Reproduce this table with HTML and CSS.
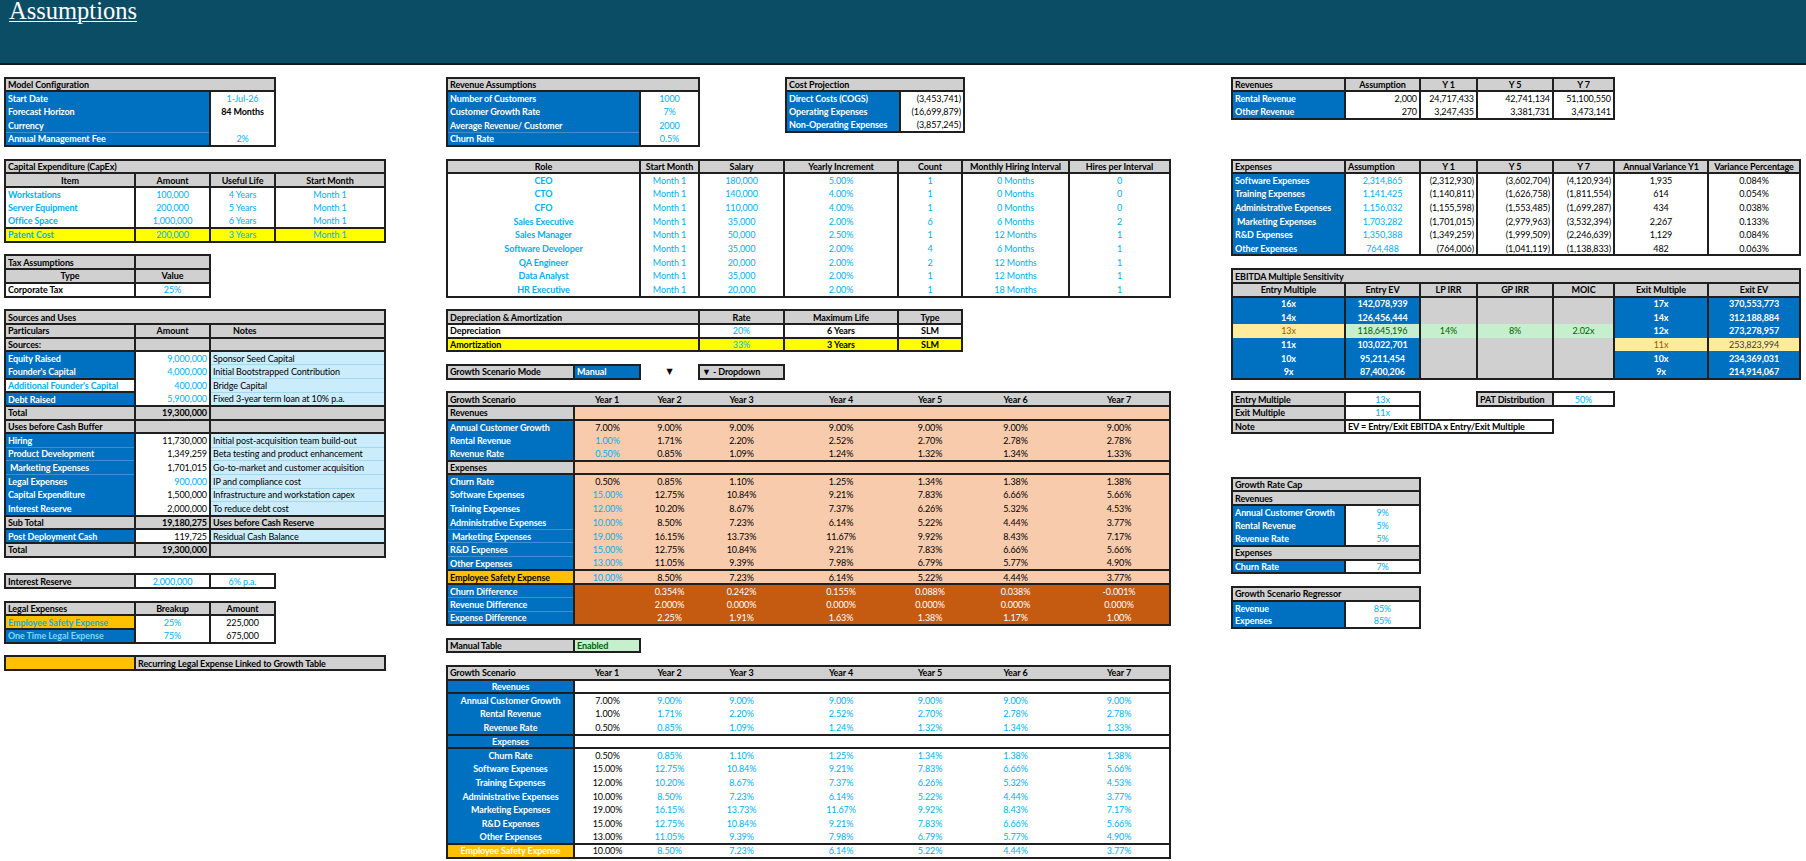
FILE: index.html
```html
<!DOCTYPE html>
<html lang="en">
<head>
<meta charset="utf-8">
<title>Assumptions</title>
<link rel="stylesheet" href="styles.css">
</head>
<body>
<header class="hdr"><h1 class="ttl">Assumptions</h1></header>
<main class="sheet">

<!-- LEFT COLUMN -->
<section class="col colL">
  <table class="w270">
    <colgroup><col class="L1"><col class="L2"><col class="L3"></colgroup>
    <tr><td class="g" colspan="3">Model Configuration</td></tr>
    <tr><td class="b" colspan="2">Start Date</td><td class="w c lb">1-Jul-26</td></tr>
    <tr><td class="b" colspan="2">Forecast Horizon</td><td class="w c bd">84 Months</td></tr>
    <tr><td class="b" colspan="2">Currency</td><td class="w c"></td></tr>
    <tr class="fl"><td class="b" colspan="2">Annual Management Fee</td><td class="w c lb">2%</td></tr>
  </table>

  <table class="w380 gap1">
    <colgroup><col class="L1"><col class="L2"><col class="L3"><col class="L4"></colgroup>
    <tr><td class="g" colspan="4">Capital Expenditure (CapEx)</td></tr>
    <tr><td class="g c">Item</td><td class="g c">Amount</td><td class="g c">Useful Life</td><td class="g c">Start Month</td></tr>
    <tr><td class="w lb bd">Workstations</td><td class="w c lb">100,000</td><td class="w c lb">4 Years</td><td class="w c lb">Month 1</td></tr>
    <tr><td class="w lb bd">Server Equipment</td><td class="w c lb">200,000</td><td class="w c lb">5 Years</td><td class="w c lb">Month 1</td></tr>
    <tr><td class="w lb bd">Office Space</td><td class="w c lb">1,000,000</td><td class="w c lb">6 Years</td><td class="w c lb">Month 1</td></tr>
    <tr><td class="y lb bd">Patent Cost</td><td class="y c lb">200,000</td><td class="y c lb">3 Years</td><td class="y c lb">Month 1</td></tr>
  </table>

  <table class="w205 gap1">
    <colgroup><col class="L1"><col class="L2"></colgroup>
    <tr><td class="g">Tax Assumptions</td><td class="g"></td></tr>
    <tr><td class="g c">Type</td><td class="g c">Value</td></tr>
    <tr><td class="w bd">Corporate Tax</td><td class="w c lb">25%</td></tr>
  </table>

  <table class="w380 gap1">
    <colgroup><col class="L1"><col class="L2"><col class="L3"><col class="L4"></colgroup>
    <tr><td class="g" colspan="4">Sources and Uses</td></tr>
    <tr><td class="g">Particulars</td><td class="g c">Amount</td><td class="g nt" colspan="2">Notes</td></tr>
    <tr><td class="g">Sources:</td><td class="g"></td><td class="g" colspan="2"></td></tr>
    <tr><td class="b">Equity Raised</td><td class="w r lb">9,000,000</td><td class="lc" colspan="2">Sponsor Seed Capital</td></tr>
    <tr class="fln"><td class="b">Founder's Capital</td><td class="w r lb">4,000,000</td><td class="lc" colspan="2">Initial Bootstrapped Contribution</td></tr>
    <tr class="fln"><td class="wb lb bd">Additional Founder's Capital</td><td class="w r lb">400,000</td><td class="lc" colspan="2">Bridge Capital</td></tr>
    <tr class="fln"><td class="b">Debt Raised</td><td class="w r lb">5,900,000</td><td class="lc" colspan="2">Fixed 3-year term loan at 10% p.a.</td></tr>
    <tr><td class="g">Total</td><td class="g r">19,300,000</td><td class="g" colspan="2"></td></tr>
    <tr><td class="g">Uses before Cash Buffer</td><td class="g"></td><td class="g" colspan="2"></td></tr>
    <tr><td class="b">Hiring</td><td class="w r">11,730,000</td><td class="lc" colspan="2">Initial post-acquisition team build-out</td></tr>
    <tr class="fl fln"><td class="b">Product Development</td><td class="w r">1,349,259</td><td class="lc" colspan="2">Beta testing and product enhancement</td></tr>
    <tr class="fl fln"><td class="b">&nbsp;Marketing Expenses</td><td class="w r">1,701,015</td><td class="lc" colspan="2">Go-to-market and customer acquisition</td></tr>
    <tr class="fl fln"><td class="b">Legal Expenses</td><td class="w r lb">900,000</td><td class="lc" colspan="2">IP and compliance cost</td></tr>
    <tr class="fln"><td class="b">Capital Expenditure</td><td class="w r">1,500,000</td><td class="lc" colspan="2">Infrastructure and workstation capex</td></tr>
    <tr class="fln"><td class="b">Interest Reserve</td><td class="w r">2,000,000</td><td class="lc" colspan="2">To reduce debt cost</td></tr>
    <tr><td class="g">Sub Total</td><td class="g r">19,180,275</td><td class="g" colspan="2">Uses before Cash Reserve</td></tr>
    <tr><td class="b">Post Deployment Cash</td><td class="w r">119,725</td><td class="lc" colspan="2">Residual Cash Balance</td></tr>
    <tr><td class="g">Total</td><td class="g r">19,300,000</td><td class="g" colspan="2"></td></tr>
  </table>

  <table class="w270 gapIR">
    <colgroup><col class="L1"><col class="L2"><col class="L3"></colgroup>
    <tr><td class="g">Interest Reserve</td><td class="wb c lb">2,000,000</td><td class="wb c lb">6% p.a.</td></tr>
  </table>

  <table class="w270 gap1">
    <colgroup><col class="L1"><col class="L2"><col class="L3"></colgroup>
    <tr><td class="g">Legal Expenses</td><td class="g c">Breakup</td><td class="g c">Amount</td></tr>
    <tr><td class="o lb bd">Employee Safety Expense</td><td class="w c lb">25%</td><td class="w c">225,000</td></tr>
    <tr><td class="b lb2">One Time Legal Expense</td><td class="w c lb">75%</td><td class="w c">675,000</td></tr>
  </table>

  <table class="w380 gap1">
    <colgroup><col class="L1"><col class="L2"><col class="L3"><col class="L4"></colgroup>
    <tr><td class="o ob"></td><td class="g" colspan="3">Recurring Legal Expense Linked to Growth Table</td></tr>
  </table>
</section>

<!-- MIDDLE COLUMN -->
<section class="col colM">
  <div class="top">
    <table class="w252">
      <colgroup><col class="c1"><col class="c2"><col class="c3"></colgroup>
      <tr><td class="g" colspan="3">Revenue Assumptions</td></tr>
      <tr><td class="b" colspan="2">Number of Customers</td><td class="w c lb">1000</td></tr>
      <tr><td class="b" colspan="2">Customer Growth Rate</td><td class="w c lb">7%</td></tr>
      <tr><td class="b" colspan="2">Average Revenue/ Customer</td><td class="w c lb">2000</td></tr>
      <tr class="fl"><td class="b" colspan="2">Churn Rate</td><td class="w c lb">0.5%</td></tr>
    </table>
    <table class="w178 cp">
      <colgroup><col class="c5"><col class="c6"></colgroup>
      <tr><td class="g" colspan="2">Cost Projection</td></tr>
      <tr><td class="b">Direct Costs (COGS)</td><td class="w r">(3,453,741)</td></tr>
      <tr><td class="b">Operating Expenses</td><td class="w r">(16,699,879)</td></tr>
      <tr><td class="b">Non-Operating Expenses</td><td class="w r">(3,857,245)</td></tr>
    </table>
  </div>

  <table class="w723 gap1">
    <colgroup><col class="c1"><col class="c2"><col class="c3"><col class="c4"><col class="c5"><col class="c6"><col class="c7"><col class="c8"></colgroup>
    <tr><td class="g c" colspan="2">Role</td><td class="g c">Start Month</td><td class="g c">Salary</td><td class="g c">Yearly Increment</td><td class="g c">Count</td><td class="g c">Monthly Hiring Interval</td><td class="g c">Hires per Interval</td></tr>
    <tr><td class="w c lb bd" colspan="2">CEO</td><td class="w c lb">Month 1</td><td class="w c lb">180,000</td><td class="w c lb">5.00%</td><td class="w c lb">1</td><td class="w c lb">0 Months</td><td class="w c lb">0</td></tr>
    <tr><td class="w c lb bd" colspan="2">CTO</td><td class="w c lb">Month 1</td><td class="w c lb">140,000</td><td class="w c lb">4.00%</td><td class="w c lb">1</td><td class="w c lb">0 Months</td><td class="w c lb">0</td></tr>
    <tr><td class="w c lb bd" colspan="2">CFO</td><td class="w c lb">Month 1</td><td class="w c lb">110,000</td><td class="w c lb">4.00%</td><td class="w c lb">1</td><td class="w c lb">0 Months</td><td class="w c lb">0</td></tr>
    <tr><td class="w c lb bd" colspan="2">Sales Executive</td><td class="w c lb">Month 1</td><td class="w c lb">35,000</td><td class="w c lb">2.00%</td><td class="w c lb">6</td><td class="w c lb">6 Months</td><td class="w c lb">2</td></tr>
    <tr><td class="w c lb bd" colspan="2">Sales Manager</td><td class="w c lb">Month 1</td><td class="w c lb">50,000</td><td class="w c lb">2.50%</td><td class="w c lb">1</td><td class="w c lb">12 Months</td><td class="w c lb">1</td></tr>
    <tr><td class="w c lb bd" colspan="2">Software Developer</td><td class="w c lb">Month 1</td><td class="w c lb">35,000</td><td class="w c lb">2.00%</td><td class="w c lb">4</td><td class="w c lb">6 Months</td><td class="w c lb">1</td></tr>
    <tr><td class="w c lb bd" colspan="2">QA Engineer</td><td class="w c lb">Month 1</td><td class="w c lb">20,000</td><td class="w c lb">2.00%</td><td class="w c lb">2</td><td class="w c lb">12 Months</td><td class="w c lb">1</td></tr>
    <tr><td class="w c lb bd" colspan="2">Data Analyst</td><td class="w c lb">Month 1</td><td class="w c lb">35,000</td><td class="w c lb">2.00%</td><td class="w c lb">1</td><td class="w c lb">12 Months</td><td class="w c lb">1</td></tr>
    <tr><td class="w c lb bd" colspan="2">HR Executive</td><td class="w c lb">Month 1</td><td class="w c lb">20,000</td><td class="w c lb">2.00%</td><td class="w c lb">1</td><td class="w c lb">18 Months</td><td class="w c lb">1</td></tr>
  </table>

  <table class="w515 gap1">
    <colgroup><col class="c1"><col class="c2"><col class="c3"><col class="c4"><col class="c5"><col class="c6"></colgroup>
    <tr><td class="g" colspan="3">Depreciation &amp; Amortization</td><td class="g c">Rate</td><td class="g c">Maximum Life</td><td class="g c">Type</td></tr>
    <tr><td class="w bd" colspan="3">Depreciation</td><td class="w c lb">20%</td><td class="w c bd">6 Years</td><td class="w c bd">SLM</td></tr>
    <tr><td class="y bd" colspan="3">Amortization</td><td class="y c lb">33%</td><td class="y c bd">3 Years</td><td class="y c bd">SLM</td></tr>
  </table>

  <table class="w337 nb gap1">
    <colgroup><col class="c1"><col class="c2"><col class="c3"><col class="c4"></colgroup>
    <tr><td class="g">Growth Scenario Mode</td><td class="b bx">Manual</td><td class="c arrow">&#9660;</td><td class="g">&#9660; - Dropdown</td></tr>
  </table>

  <table class="w723 gap1">
    <colgroup><col class="c1"><col class="c2"><col class="c3"><col class="c4"><col class="c5"><col class="c6"><col class="c7"><col class="c8"></colgroup>
    <tr class="gh"><td>Growth Scenario</td><td class="c">Year 1</td><td class="c">Year 2</td><td class="c">Year 3</td><td class="c">Year 4</td><td class="c">Year 5</td><td class="c">Year 6</td><td class="c">Year 7</td></tr>
    <tr class="T"><td class="g">Revenues</td><td class="p" colspan="7"></td></tr>
    <tr class="T"><td class="b">Annual Customer Growth</td><td class="p c">7.00%</td><td class="p c">9.00%</td><td class="p c">9.00%</td><td class="p c">9.00%</td><td class="p c">9.00%</td><td class="p c">9.00%</td><td class="p c">9.00%</td></tr>
    <tr><td class="b">Rental Revenue</td><td class="p c lb">1.00%</td><td class="p c">1.71%</td><td class="p c">2.20%</td><td class="p c">2.52%</td><td class="p c">2.70%</td><td class="p c">2.78%</td><td class="p c">2.78%</td></tr>
    <tr><td class="b">Revenue Rate</td><td class="p c lb">0.50%</td><td class="p c">0.85%</td><td class="p c">1.09%</td><td class="p c">1.24%</td><td class="p c">1.32%</td><td class="p c">1.34%</td><td class="p c">1.33%</td></tr>
    <tr class="T"><td class="g">Expenses</td><td class="p" colspan="7"></td></tr>
    <tr class="T"><td class="b">Churn Rate</td><td class="p c">0.50%</td><td class="p c">0.85%</td><td class="p c">1.10%</td><td class="p c">1.25%</td><td class="p c">1.34%</td><td class="p c">1.38%</td><td class="p c">1.38%</td></tr>
    <tr><td class="b">Software Expenses</td><td class="p c lb">15.00%</td><td class="p c">12.75%</td><td class="p c">10.84%</td><td class="p c">9.21%</td><td class="p c">7.83%</td><td class="p c">6.66%</td><td class="p c">5.66%</td></tr>
    <tr><td class="b">Training Expenses</td><td class="p c lb">12.00%</td><td class="p c">10.20%</td><td class="p c">8.67%</td><td class="p c">7.37%</td><td class="p c">6.26%</td><td class="p c">5.32%</td><td class="p c">4.53%</td></tr>
    <tr><td class="b">Administrative Expenses</td><td class="p c lb">10.00%</td><td class="p c">8.50%</td><td class="p c">7.23%</td><td class="p c">6.14%</td><td class="p c">5.22%</td><td class="p c">4.44%</td><td class="p c">3.77%</td></tr>
    <tr class="fl"><td class="b">&nbsp;Marketing Expenses</td><td class="p c lb">19.00%</td><td class="p c">16.15%</td><td class="p c">13.73%</td><td class="p c">11.67%</td><td class="p c">9.92%</td><td class="p c">8.43%</td><td class="p c">7.17%</td></tr>
    <tr class="fl"><td class="b">R&amp;D Expenses</td><td class="p c lb">15.00%</td><td class="p c">12.75%</td><td class="p c">10.84%</td><td class="p c">9.21%</td><td class="p c">7.83%</td><td class="p c">6.66%</td><td class="p c">5.66%</td></tr>
    <tr class="fl"><td class="b">Other Expenses</td><td class="p c lb">13.00%</td><td class="p c">11.05%</td><td class="p c">9.39%</td><td class="p c">7.98%</td><td class="p c">6.79%</td><td class="p c">5.77%</td><td class="p c">4.90%</td></tr>
    <tr class="T"><td class="o bd">Employee Safety Expense</td><td class="p c lb">10.00%</td><td class="p c">8.50%</td><td class="p c">7.23%</td><td class="p c">6.14%</td><td class="p c">5.22%</td><td class="p c">4.44%</td><td class="p c">3.77%</td></tr>
    <tr class="T"><td class="b">Churn Difference</td><td class="do c"></td><td class="do c">0.354%</td><td class="do c">0.242%</td><td class="do c">0.155%</td><td class="do c">0.088%</td><td class="do c">0.038%</td><td class="do c">-0.001%</td></tr>
    <tr class="fl"><td class="b">Revenue Difference</td><td class="do c"></td><td class="do c">2.000%</td><td class="do c">0.000%</td><td class="do c">0.000%</td><td class="do c">0.000%</td><td class="do c">0.000%</td><td class="do c">0.000%</td></tr>
    <tr class="fl"><td class="b">Expense Difference</td><td class="do c"></td><td class="do c">2.25%</td><td class="do c">1.91%</td><td class="do c">1.63%</td><td class="do c">1.38%</td><td class="do c">1.17%</td><td class="do c">1.00%</td></tr>
  </table>

  <table class="w193 gap1">
    <colgroup><col class="c1"><col class="c2"></colgroup>
    <tr><td class="g">Manual Table</td><td class="gn">Enabled</td></tr>
  </table>

  <table class="w723 gap1">
    <colgroup><col class="c1"><col class="c2"><col class="c3"><col class="c4"><col class="c5"><col class="c6"><col class="c7"><col class="c8"></colgroup>
    <tr class="gh"><td>Growth Scenario</td><td class="c">Year 1</td><td class="c">Year 2</td><td class="c">Year 3</td><td class="c">Year 4</td><td class="c">Year 5</td><td class="c">Year 6</td><td class="c">Year 7</td></tr>
    <tr class="T"><td class="b c">Revenues</td><td class="w2" colspan="7"></td></tr>
    <tr class="T"><td class="b c">Annual Customer Growth</td><td class="w2 c">7.00%</td><td class="w2 c lb">9.00%</td><td class="w2 c lb">9.00%</td><td class="w2 c lb">9.00%</td><td class="w2 c lb">9.00%</td><td class="w2 c lb">9.00%</td><td class="w2 c lb">9.00%</td></tr>
    <tr><td class="b c">Rental Revenue</td><td class="w2 c">1.00%</td><td class="w2 c lb">1.71%</td><td class="w2 c lb">2.20%</td><td class="w2 c lb">2.52%</td><td class="w2 c lb">2.70%</td><td class="w2 c lb">2.78%</td><td class="w2 c lb">2.78%</td></tr>
    <tr><td class="b c">Revenue Rate</td><td class="w2 c">0.50%</td><td class="w2 c lb">0.85%</td><td class="w2 c lb">1.09%</td><td class="w2 c lb">1.24%</td><td class="w2 c lb">1.32%</td><td class="w2 c lb">1.34%</td><td class="w2 c lb">1.33%</td></tr>
    <tr class="T"><td class="b c">Expenses</td><td class="w2" colspan="7"></td></tr>
    <tr class="T"><td class="b c">Churn Rate</td><td class="w2 c">0.50%</td><td class="w2 c lb">0.85%</td><td class="w2 c lb">1.10%</td><td class="w2 c lb">1.25%</td><td class="w2 c lb">1.34%</td><td class="w2 c lb">1.38%</td><td class="w2 c lb">1.38%</td></tr>
    <tr><td class="b c">Software Expenses</td><td class="w2 c">15.00%</td><td class="w2 c lb">12.75%</td><td class="w2 c lb">10.84%</td><td class="w2 c lb">9.21%</td><td class="w2 c lb">7.83%</td><td class="w2 c lb">6.66%</td><td class="w2 c lb">5.66%</td></tr>
    <tr><td class="b c">Training Expenses</td><td class="w2 c">12.00%</td><td class="w2 c lb">10.20%</td><td class="w2 c lb">8.67%</td><td class="w2 c lb">7.37%</td><td class="w2 c lb">6.26%</td><td class="w2 c lb">5.32%</td><td class="w2 c lb">4.53%</td></tr>
    <tr><td class="b c">Administrative Expenses</td><td class="w2 c">10.00%</td><td class="w2 c lb">8.50%</td><td class="w2 c lb">7.23%</td><td class="w2 c lb">6.14%</td><td class="w2 c lb">5.22%</td><td class="w2 c lb">4.44%</td><td class="w2 c lb">3.77%</td></tr>
    <tr><td class="b c">Marketing Expenses</td><td class="w2 c">19.00%</td><td class="w2 c lb">16.15%</td><td class="w2 c lb">13.73%</td><td class="w2 c lb">11.67%</td><td class="w2 c lb">9.92%</td><td class="w2 c lb">8.43%</td><td class="w2 c lb">7.17%</td></tr>
    <tr><td class="b c">R&amp;D Expenses</td><td class="w2 c">15.00%</td><td class="w2 c lb">12.75%</td><td class="w2 c lb">10.84%</td><td class="w2 c lb">9.21%</td><td class="w2 c lb">7.83%</td><td class="w2 c lb">6.66%</td><td class="w2 c lb">5.66%</td></tr>
    <tr><td class="b c">Other Expenses</td><td class="w2 c">13.00%</td><td class="w2 c lb">11.05%</td><td class="w2 c lb">9.39%</td><td class="w2 c lb">7.98%</td><td class="w2 c lb">6.79%</td><td class="w2 c lb">5.77%</td><td class="w2 c lb">4.90%</td></tr>
    <tr class="T"><td class="o c wt">Employee Safety Expense</td><td class="w2 c">10.00%</td><td class="w2 c lb">8.50%</td><td class="w2 c lb">7.23%</td><td class="w2 c lb">6.14%</td><td class="w2 c lb">5.22%</td><td class="w2 c lb">4.44%</td><td class="w2 c lb">3.77%</td></tr>
  </table>
</section>

<!-- RIGHT COLUMN -->
<section class="col colR">
  <table class="w382">
    <colgroup><col class="R1"><col class="R2"><col class="R3"><col class="R4"><col class="R5"></colgroup>
    <tr><td class="g">Revenues</td><td class="g c">Assumption</td><td class="g c">Y 1</td><td class="g c">Y 5</td><td class="g c">Y 7</td></tr>
    <tr><td class="b">Rental Revenue</td><td class="w r">2,000</td><td class="w r">24,717,433</td><td class="w r">42,741,134</td><td class="w r">51,100,550</td></tr>
    <tr><td class="b">Other Revenue</td><td class="w r">270</td><td class="w r">3,247,435</td><td class="w r">3,381,731</td><td class="w r">3,473,141</td></tr>
  </table>

  <table class="w568 gap3">
    <colgroup><col class="R1"><col class="R2"><col class="R3"><col class="R4"><col class="R5"><col class="R6"><col class="R7"></colgroup>
    <tr><td class="g">Expenses</td><td class="g">Assumption</td><td class="g c">Y 1</td><td class="g c">Y 5</td><td class="g c">Y 7</td><td class="g c">Annual Variance Y1</td><td class="g c">Variance Percentage</td></tr>
    <tr><td class="b">Software Expenses</td><td class="w c lb">2,314,865</td><td class="w r">(2,312,930)</td><td class="w r">(3,602,704)</td><td class="w r">(4,120,934)</td><td class="w c">1,935</td><td class="w c">0.084%</td></tr>
    <tr><td class="b">Training Expenses</td><td class="w c lb">1,141,425</td><td class="w r">(1,140,811)</td><td class="w r">(1,626,758)</td><td class="w r">(1,811,554)</td><td class="w c">614</td><td class="w c">0.054%</td></tr>
    <tr><td class="b">Administrative Expenses</td><td class="w c lb">1,156,032</td><td class="w r">(1,155,598)</td><td class="w r">(1,553,485)</td><td class="w r">(1,699,287)</td><td class="w c">434</td><td class="w c">0.038%</td></tr>
    <tr><td class="b">&nbsp;Marketing Expenses</td><td class="w c lb">1,703,282</td><td class="w r">(1,701,015)</td><td class="w r">(2,979,963)</td><td class="w r">(3,532,394)</td><td class="w c">2,267</td><td class="w c">0.133%</td></tr>
    <tr><td class="b">R&amp;D Expenses</td><td class="w c lb">1,350,388</td><td class="w r">(1,349,259)</td><td class="w r">(1,999,509)</td><td class="w r">(2,246,639)</td><td class="w c">1,129</td><td class="w c">0.084%</td></tr>
    <tr><td class="b">Other Expenses</td><td class="w c lb">764,488</td><td class="w r">(764,006)</td><td class="w r">(1,041,119)</td><td class="w r">(1,138,833)</td><td class="w c">482</td><td class="w c">0.063%</td></tr>
  </table>

  <table class="w568 gap1">
    <colgroup><col class="R1"><col class="R2"><col class="R3"><col class="R4"><col class="R5"><col class="R6"><col class="R7"></colgroup>
    <tr><td class="g" colspan="7">EBITDA Multiple Sensitivity</td></tr>
    <tr><td class="g c">Entry Multiple</td><td class="g c">Entry EV</td><td class="g c">LP IRR</td><td class="g c">GP IRR</td><td class="g c">MOIC</td><td class="g c">Exit Multiple</td><td class="g c">Exit EV</td></tr>
    <tr><td class="b c">16x</td><td class="b c">142,078,939</td><td class="gv"></td><td class="gv"></td><td class="gv"></td><td class="b c">17x</td><td class="b c">370,553,773</td></tr>
    <tr><td class="b c">14x</td><td class="b c">126,456,444</td><td class="gv"></td><td class="gv"></td><td class="gv"></td><td class="b c">14x</td><td class="b c">312,188,884</td></tr>
    <tr><td class="ly c">13x</td><td class="gr c">118,645,196</td><td class="gr c">14%</td><td class="gr c">8%</td><td class="gr c">2.02x</td><td class="b c">12x</td><td class="b c">273,278,957</td></tr>
    <tr><td class="b c">11x</td><td class="b c">103,022,701</td><td class="gv"></td><td class="gv"></td><td class="gv"></td><td class="ly c">11x</td><td class="ly c dk">253,823,994</td></tr>
    <tr><td class="b c">10x</td><td class="b c">95,211,454</td><td class="gv"></td><td class="gv"></td><td class="gv"></td><td class="b c">10x</td><td class="b c">234,369,031</td></tr>
    <tr><td class="b c">9x</td><td class="b c">87,400,206</td><td class="gv"></td><td class="gv"></td><td class="gv"></td><td class="b c">9x</td><td class="b c">214,914,067</td></tr>
  </table>

  <table class="w382 nb gap1">
    <colgroup><col class="R1"><col class="R2"><col class="R3"><col class="R4"><col class="R5"></colgroup>
    <tr><td class="g">Entry Multiple</td><td class="wb c lb">13x</td><td></td><td class="g">PAT Distribution</td><td class="wb c lb">50%</td></tr>
    <tr><td class="g">Exit Multiple</td><td class="wb c lb">11x</td><td></td><td></td><td></td></tr>
    <tr><td class="g">Note</td><td class="wb bd" colspan="3">EV = Entry/Exit EBITDA x Entry/Exit Multiple</td><td></td></tr>
  </table>

  <table class="w188 gapGRC">
    <colgroup><col class="R1"><col class="R2"></colgroup>
    <tr><td class="g" colspan="2">Growth Rate Cap</td></tr>
    <tr><td class="g" colspan="2">Revenues</td></tr>
    <tr><td class="b">Annual Customer Growth</td><td class="w c lb">9%</td></tr>
    <tr><td class="b">Rental Revenue</td><td class="w c lb">5%</td></tr>
    <tr><td class="b">Revenue Rate</td><td class="w c lb">5%</td></tr>
    <tr><td class="g" colspan="2">Expenses</td></tr>
    <tr><td class="b">Churn Rate</td><td class="w c lb">7%</td></tr>
  </table>

  <table class="w188 gap1">
    <colgroup><col class="R1"><col class="R2"></colgroup>
    <tr><td class="g" colspan="2">Growth Scenario Regressor</td></tr>
    <tr><td class="b">Revenue</td><td class="w c lb">85%</td></tr>
    <tr><td class="b">Expenses</td><td class="w c lb">85%</td></tr>
  </table>
</section>

</main>
</body>
</html>
```

FILE: styles.css
```css
:root{
  --r:13.7px;
  --bc:#1f1f1f;
  --blue:#0070c0;
  --gray:#d0d0d0;
  --lb:#00b0f0;
}
*{box-sizing:border-box}
html,body{margin:0;padding:0}
body{
  width:1806px;height:861px;overflow:hidden;background:#fff;
  font-family:Lato,"Liberation Sans",Arial,sans-serif;
  font-size:9px;color:#000;letter-spacing:-0.1px;
}
.hdr{height:65px;background:#0b4d65;border-bottom:2px solid #161616}
.ttl{
  display:inline-block;margin:-1px 0 0 9px;padding:0;
  font:400 24.5px/24px "Liberation Serif","Times New Roman",serif;
  color:#fff;letter-spacing:0;
  text-decoration:underline;text-decoration-thickness:1px;text-underline-offset:2px;
}
.sheet{display:flex;align-items:flex-start;padding:11.5px 0 0 4px}
.col{display:flex;flex-direction:column;align-items:flex-start}
.colL{width:442px;flex:none}
.colM{width:785px;flex:none}
.colR{flex:none}
.top{display:flex;align-items:flex-start}
.cp{margin-left:85px}
.gap1{margin-top:calc(var(--r) - 2px)}
.gap3{margin-top:calc(var(--r) * 3 - 2px)}
.gapIR{margin-top:calc(var(--r) + 2px)}
.gapGRC{margin-top:calc(var(--r) * 3 + 1px)}

/* column widths */
.L1{width:130px}.L2{width:75px}.L3{width:65px}.L4{width:110px}
.c1{width:127px}.c2{width:66px}.c3{width:59px}.c4{width:85px}
.c5{width:114px}.c6{width:64px}.c7{width:107px}.c8{width:101px}
.R1{width:113px}.R2{width:75px}.R3{width:57px}.R4{width:76px}
.R5{width:61px}.R6{width:94px}.R7{width:92px}
.w178{width:178px}.w188{width:188px}.w193{width:193px}.w205{width:205px}
.w252{width:252px}.w270{width:270px}.w337{width:337px}.w380{width:380px}
.w382{width:382px}.w515{width:515px}.w568{width:568px}.w723{width:723px}

table{border-collapse:collapse;table-layout:fixed;border:2px solid var(--bc)}
table.nb{border:none}
tr{height:var(--r)}
td{
  padding:0 2px;white-space:nowrap;overflow:hidden;
  line-height:11px;font-weight:400;text-align:left;vertical-align:middle;
}
.c{text-align:center}
.r{text-align:right}
.bd{font-weight:700}
.lb{color:var(--lb)}
.nt{padding-left:22px}

/* cell kinds */
.g{background:var(--gray);border:2px solid var(--bc);font-weight:700}
.gh td{background:var(--gray);font-weight:700}
.b{background:var(--blue);color:#fff;font-weight:700;border-left:2px solid var(--bc);border-right:2px solid var(--bc)}
.b.lb2{color:#7fd6fb}
.bx{border:2px solid var(--bc)}
.w{background:#fff;border-left:2px solid var(--bc);border-right:2px solid var(--bc)}
.w2{background:#fff}
.wb{background:#fff;border:2px solid var(--bc)}
.y{background:#ffff00;border:2px solid var(--bc)}
.o{background:#ffc000;border:2px solid var(--bc)}
.o.wt{color:#fff;font-weight:700}
.p{background:#f8cbad}
.do{background:#c55a11;color:#fff}
.lc{background:#cbedfb;border-left:2px solid var(--bc);border-right:2px solid var(--bc)}
.gv{background:var(--gray);border-left:2px solid var(--bc);border-right:2px solid var(--bc)}
.gr{background:#c6efce;color:#006100;border-left:2px solid var(--bc);border-right:2px solid var(--bc)}
.ly{background:#ffeb9c;color:#9c5700;border-left:2px solid var(--bc);border-right:2px solid var(--bc)}
.ly.dk{color:#3b3b3b}
.gn{background:#c6efce;color:#006100;font-weight:700;border:2px solid var(--bc)}
.arrow{font-size:8px;font-family:"DejaVu Sans",sans-serif}

/* row separators */
tr.T > td{border-top:2px solid var(--bc)}
tr.fl > td.b{border-top:1px solid #3d8fd2}
tr.fln > td.lc{border-top:1px solid #a3d8ee}
```
